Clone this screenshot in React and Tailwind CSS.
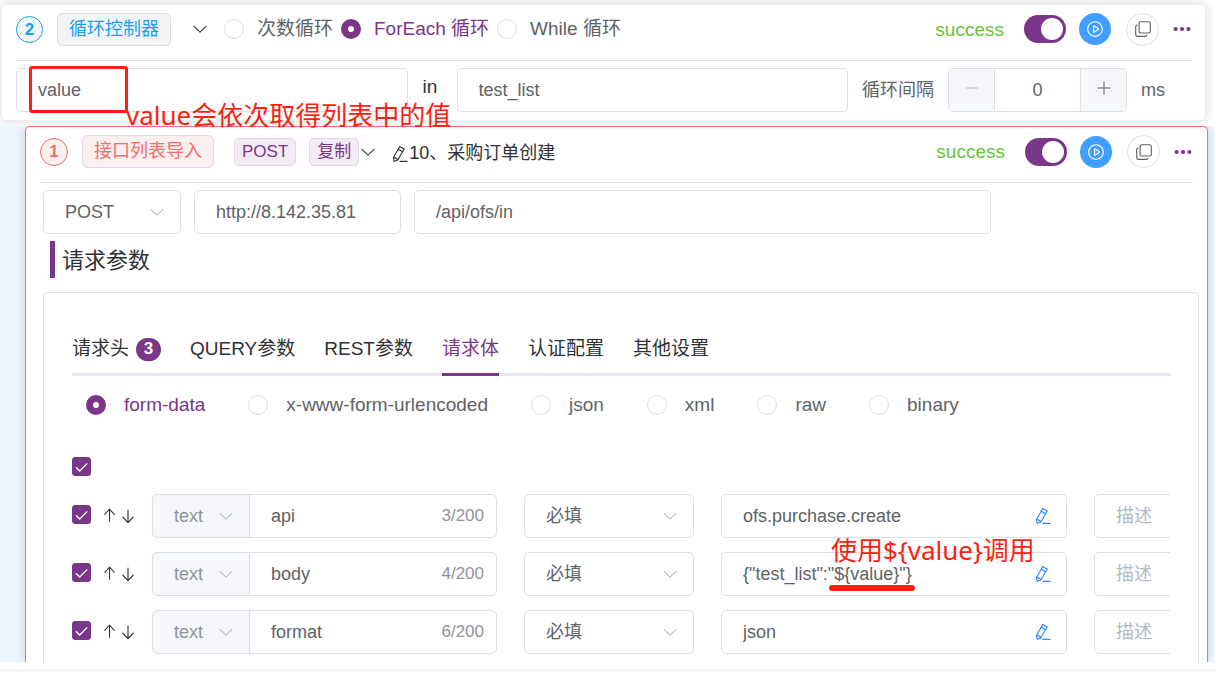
import React from "react";

const PATHS = {
  down: "M831.872 340.864 512 652.672 192.128 340.864a30.592 30.592 0 0 0-42.752 0 29.12 29.12 0 0 0 0 41.6L489.664 714.24a32 32 0 0 0 44.672 0l340.288-331.712a29.12 29.12 0 0 0 0-41.728 30.592 30.592 0 0 0-42.752 0z",
  play: "M512 64a448 448 0 1 1 0 896 448 448 0 0 1 0-896zm0 832a384 384 0 0 0 0-768 384 384 0 0 0 0 768zm-48-247.616L668.608 512 464 375.616v272.768zm10.624-342.656 249.472 166.336a48 48 0 0 1 0 79.872L474.624 718.272A48 48 0 0 1 400 678.336V345.6a48 48 0 0 1 74.624-39.936z",
  copy: "M768 832a128 128 0 0 1-128 128H192A128 128 0 0 1 64 832V384a128 128 0 0 1 128-128v64a64 64 0 0 0-64 64v448a64 64 0 0 0 64 64h448a64 64 0 0 0 64-64h64z M384 128a64 64 0 0 0-64 64v448a64 64 0 0 0 64 64h448a64 64 0 0 0 64-64V192a64 64 0 0 0-64-64H384zm0-64h448a128 128 0 0 1 128 128v448a128 128 0 0 1-128 128H384a128 128 0 0 1-128-128V192A128 128 0 0 1 384 64z",
  pen: "m199.04 672.64 193.984 112 224-387.968-193.92-112-224 388.032zm-23.872 60.16 32.896 148.288 144.896-45.696L175.168 732.8zM455.04 229.248l193.92 112 56.704-98.112-193.984-112-56.64 98.112zM104.32 708.8l384-665.024 304.768 175.936L409.152 884.8h.064l-248.448 78.336L104.32 708.8zm384 254.272v-64h448v64h-448z",
  top: "M572.235 205.282v600.365a30.118 30.118 0 1 1-60.235 0V205.282L292.382 438.633a28.913 28.913 0 0 1-42.646 0 33.43 33.43 0 0 1 0-45.236l271.058-288.045a28.913 28.913 0 0 1 42.647 0L834.5 393.397a33.43 33.43 0 0 1 0 45.176 28.913 28.913 0 0 1-42.647 0l-219.618-233.23z",
  bottom:
    "M544 805.888V168a32 32 0 1 0-64 0v637.888L246.656 557.952a30.72 30.72 0 0 0-45.312 0 35.52 35.52 0 0 0 0 48.064l288 306.048a30.72 30.72 0 0 0 45.312 0l288-306.048a35.52 35.52 0 0 0 0-48 30.72 30.72 0 0 0-45.312 0L544 805.824z",
  minus: "M128 544h768a32 32 0 1 0 0-64H128a32 32 0 0 0 0 64z",
  plus: "M480 480V128a32 32 0 0 1 64 0v352h352a32 32 0 1 1 0 64H544v352a32 32 0 1 1-64 0V544H128a32 32 0 0 1 0-64h352z",
};

function Icon({ name, className = "size-[18px]" }) {
  return (
    <svg viewBox="0 0 1024 1024" fill="currentColor" aria-hidden="true" className={`shrink-0 ${className}`}>
      <path d={PATHS[name]} />
    </svg>
  );
}

const FIELD =
  "h-11 w-full min-w-0 rounded-[5px] border border-[#dcdfe6] px-[21px] text-[18px] outline-none placeholder:text-[#b4b8c0]";

function TextField({ label, className = "", ...rest }) {
  return <input type="text" aria-label={label} className={`${FIELD} bg-white text-[#606266] ${className}`} {...rest} />;
}

function SelectField({ label, options, className = "", tone = "bg-white text-[#606266]" }) {
  return (
    <div className={`relative ${className}`}>
      <select aria-label={label} className={`${FIELD} appearance-none ${tone}`}>
        {options.map((o) => (
          <option key={o}>{o}</option>
        ))}
      </select>
      <span className="pointer-events-none absolute inset-y-0 right-[15px] flex items-center text-[#b9bdc6]">
        <Icon name="down" />
      </span>
    </div>
  );
}

function Radio({ name, label, defaultChecked, gap }) {
  return (
    <label className={`flex items-center text-[19px] leading-7 text-[#606266] has-checked:text-[#7a3688] ${gap}`}>
      <input
        type="radio"
        name={name}
        defaultChecked={defaultChecked}
        className="size-5 shrink-0 appearance-none rounded-full border border-[#dcdfe6] bg-white checked:border-[7px] checked:border-[#7a3688]"
      />
      <span>{label}</span>
    </label>
  );
}

function Check({ label }) {
  return (
    <span className="grid size-[19px] shrink-0 place-items-center">
      <input
        type="checkbox"
        defaultChecked
        aria-label={label}
        className="peer col-start-1 row-start-1 size-[19px] appearance-none rounded-[3px] border border-[#dcdfe6] checked:border-[#7a3688] checked:bg-[#7a3688]"
      />
      <svg
        viewBox="0 0 19 19"
        aria-hidden="true"
        className="pointer-events-none invisible col-start-1 row-start-1 size-[19px] fill-none stroke-white peer-checked:visible"
      >
        <path d="M4 10.2 7.7 14 15.3 6.4" strokeWidth="1.3" />
      </svg>
    </span>
  );
}

function Actions() {
  return (
    <div className="ml-auto flex items-center">
      <span className="mr-5 pt-0.5 text-[19px] text-[#67c23a]">success</span>
      <label className="flex">
        <input type="checkbox" role="switch" defaultChecked aria-label="启用" className="peer sr-only" />
        <span className="flex h-7 w-[42px] justify-end rounded-full bg-[#7a3688] p-[3px]">
          <span className="size-[22px] rounded-full bg-white" />
        </span>
      </label>
      <button
        type="button"
        aria-label="运行"
        className="ml-[13px] grid size-8 place-items-center rounded-full bg-[#409eff] text-white"
      >
        <Icon name="play" />
      </button>
      <button
        type="button"
        aria-label="复制步骤"
        className="ml-[15px] grid size-[33px] place-items-center rounded-full border border-[#dcdfe6] text-[#606266]"
      >
        <Icon name="copy" />
      </button>
      <button type="button" aria-label="更多" className="ml-[14px] text-[#7a3688]">
        <svg viewBox="0 0 19 18" fill="currentColor" className="h-[18px] w-[19px]">
          <circle cx="2.6" cy="9" r="2.1" />
          <circle cx="9" cy="9" r="2.1" />
          <circle cx="15.4" cy="9" r="2.1" />
        </svg>
      </button>
    </div>
  );
}

function LoopCard() {
  return (
    <section className="mr-2 ml-px rounded-[5px] border border-[#ebeef5] bg-white pr-[13px] pb-2 pl-[14px] shadow-[0_0_12px_rgba(0,0,0,0.16)]">
      <div className="flex h-[56px] items-center border-b border-[#dcdfe6] pb-[7px]">
        <span className="grid size-[27px] place-items-center rounded-full border border-[#0fa3f0] bg-[#f4f4f5] text-[17px] font-bold text-[#0fa3f0]">
          2
        </span>
        <span className="ml-[14px] flex h-[33px] items-center rounded-[5px] border border-[#e4d7e7] bg-[#f4f4f5] px-[11px] text-[18px] text-[#0fa3f0]">
          循环控制器
        </span>
        <button type="button" aria-label="展开" className="mr-[15px] ml-[20px] text-[#303133]">
          <Icon name="down" />
        </button>
        <div role="radiogroup" aria-label="循环类型" className="flex items-center gap-2">
          <Radio name="loop" label="次数循环" gap="gap-[13px]" />
          <Radio name="loop" label="ForEach 循环" gap="gap-[13px]" defaultChecked />
          <Radio name="loop" label="While 循环" gap="gap-[13px]" />
        </div>
        <Actions />
      </div>
      <div className="mt-[7px] flex items-center">
        <div className="relative flex-1">
          <TextField label="变量名" defaultValue="value" />
          <span className="pointer-events-none absolute -top-0.5 left-[13px] h-[47px] w-[99px] rounded-[3px] border-[3px] border-[#ff1f10]" />
        </div>
        <span className="w-[49px] pr-1 pb-1.5 text-center text-[19px] text-[#303133]">in</span>
        <div className="flex-1">
          <TextField label="列表" defaultValue="test_list" />
        </div>
        <label htmlFor="interval" className="mx-[14px] text-[18px] text-[#606266]">
          循环间隔
        </label>
        <div className="flex h-11 w-[179px] overflow-hidden rounded-[5px] border border-[#dcdfe6]">
          <button
            type="button"
            aria-label="减少"
            className="grid w-[46px] place-items-center border-r border-[#dcdfe6] bg-[#f5f7fa] pb-1 text-[#b9bdc6]"
          >
            <Icon name="minus" className="size-4" />
          </button>
          <input
            id="interval"
            type="text"
            defaultValue="0"
            className="w-0 flex-1 text-center text-[18px] text-[#606266] outline-none"
          />
          <button
            type="button"
            aria-label="增加"
            className="grid w-[46px] place-items-center border-l border-[#dcdfe6] bg-[#f5f7fa] pb-1 text-[#606266]"
          >
            <Icon name="plus" className="size-4" />
          </button>
        </div>
        <span className="mr-[27px] ml-[14px] text-[18px] text-[#606266]">ms</span>
      </div>
    </section>
  );
}

const TABS = ["请求头", "QUERY参数", "REST参数", "请求体", "认证配置", "其他设置"];
const BODY_TYPES = ["form-data", "x-www-form-urlencoded", "json", "xml", "raw", "binary"];
const ROWS = [
  { name: "api", value: "ofs.purchase.create" },
  { name: "body", value: '{"test_list":"${value}"}', note: true },
  { name: "format", value: "json" },
];

function ParamRow({ name, value, note }) {
  return (
    <div className="flex w-[calc(100%+124px)] items-center gap-[27px]">
      <div className="flex flex-1 items-center">
        <div className="flex w-20 shrink-0 items-center pb-1 text-[#303133]">
          <Check label={`选择 ${name}`} />
          <button type="button" aria-label="上移" className="ml-[9px] pt-1">
            <Icon name="top" />
          </button>
          <button type="button" aria-label="下移" className="ml-px pt-1">
            <Icon name="bottom" />
          </button>
        </div>
        <SelectField
          label="类型"
          options={["text", "file"]}
          className="w-[98px] shrink-0"
          tone="rounded-r-none bg-[#f5f7fa] text-[#909399]"
        />
        <div className="relative -ml-px flex-1">
          <TextField label="参数名" defaultValue={name} className="rounded-l-none pr-[70px]" />
          <span className="absolute inset-y-0 right-[13px] flex items-center text-[17px] text-[#909399]">
            {name.length}/200
          </span>
        </div>
      </div>
      <SelectField label="是否必填" options={["必填", "非必填"]} className="w-[170px] shrink-0" />
      <div className="relative w-[346px] shrink-0">
        <TextField label="参数值" defaultValue={value} className="pr-12" />
        <button type="button" aria-label="编辑" className="absolute inset-y-0 right-[15px] flex items-center text-[#2b85fb]">
          <Icon name="pen" />
        </button>
        {note && (
          <>
            <p className="pointer-events-none absolute -top-[22px] left-[110px] font-['Noto_Sans','Noto_Sans_CJK_SC',sans-serif] text-[26px] leading-10 whitespace-nowrap text-[#ff1f10]">
              {"使用${value}调用"}
            </p>
            <span className="pointer-events-none absolute top-[33px] left-[108px] h-1.5 w-[86px] rounded-full bg-[#ff1f10]" />
          </>
        )}
      </div>
      <div className="w-[200px] shrink-0">
        <TextField label="描述" placeholder="描述" />
      </div>
    </div>
  );
}

function RequestCard() {
  return (
    <section className="mr-1.5 ml-[25px] flex-1 rounded-t-[5px] border border-b-0 border-[#f56c6c] bg-white shadow-[0_0_12px_rgba(0,0,0,0.15)]">
      <div className="mr-[14px] ml-[14px] flex h-[56px] items-center border-b border-[#dcdfe6] pb-1.5">
        <span className="grid size-7 place-items-center rounded-full border border-[#f56c6c] bg-[#fbf0f0] text-[17px] font-bold text-[#f56c6c]">
          1
        </span>
        <span className="ml-[14px] flex h-[33px] items-center rounded-[5px] border border-[#e4d7e7] bg-[#fbf0f0] px-[11px] text-[18px] text-[#f56c6c]">
          接口列表导入
        </span>
        <span className="ml-5 flex h-7 items-center rounded-[5px] border border-[#e4d7e7] bg-[#f2ebf3] px-[7px] text-[17px] text-[#7a3688]">
          POST
        </span>
        <button
          type="button"
          className="ml-[13px] flex h-7 items-center rounded-[5px] border border-[#e4d7e7] bg-[#f2ebf3] px-[7px] text-[17px] text-[#7a3688]"
        >
          复制
        </button>
        <button type="button" aria-label="展开" className="text-[#303133]">
          <Icon name="down" />
        </button>
        <span className="ml-[14px] flex items-center pt-1 text-[18px] text-[#303133]">
          <Icon name="pen" />
          10、采购订单创建
        </span>
        <Actions />
      </div>

      <div className="mt-[7px] mr-[216px] ml-[17px] flex gap-[13px]">
        <SelectField label="请求方法" options={["POST", "GET", "PUT", "DELETE"]} className="w-[138px] shrink-0" />
        <div className="w-[207px] shrink-0">
          <TextField label="域名" defaultValue="http://8.142.35.81" />
        </div>
        <div className="flex-1">
          <TextField label="路径" defaultValue="/api/ofs/in" />
        </div>
      </div>

      <h2 className="mt-[7px] ml-6 border-l-[5px] border-[#7a3688] pt-0.5 pl-[7px] text-[22px] leading-[35px] text-[#303133]">
        请求参数
      </h2>

      <div className="mt-[14px] mr-2 ml-[17px] rounded-t-[5px] border border-b-0 border-[#dcdfe6] px-7 pt-[37px] pb-2">
        <div role="tablist" className="flex gap-[29px] border-b-[3px] border-[#e4e7ed]">
          {TABS.map((t) => (
            <button
              key={t}
              type="button"
              role="tab"
              aria-selected={t === "请求体"}
              className="-mb-[3px] flex h-[46px] items-center border-b-[3px] border-transparent pb-[5px] text-[19px] text-[#303133] aria-selected:border-[#7a3688] aria-selected:text-[#7a3688]"
            >
              {t}
              {t === "请求头" && (
                <span className="ml-[7px] flex h-[23px] w-[25px] items-center justify-center rounded-full bg-[#7a3688] text-[17px] font-bold text-white">
                  3
                </span>
              )}
            </button>
          ))}
        </div>
        <div role="radiogroup" aria-label="请求体类型" className="mt-[15px] ml-[14px] flex gap-[43px]">
          {BODY_TYPES.map((t, i) => (
            <Radio key={t} name="body-type" label={t} defaultChecked={i === 0} gap="gap-[18px]" />
          ))}
        </div>
        <div className="mt-[38px]">
          <Check label="全选" />
        </div>
        <div className="mt-[18px] flex flex-col gap-[14px] overflow-x-clip">
          {ROWS.map((r) => (
            <ParamRow key={r.name} {...r} />
          ))}
        </div>
      </div>
    </section>
  );
}

export default function App() {
  return (
    <div className="flex min-h-screen flex-col bg-white font-['Liberation_Sans','Noto_Sans_CJK_SC',sans-serif]">
      <main className="relative mr-0.5 flex flex-1 flex-col overflow-hidden bg-[#eef6ff]">
        <div className="relative z-10 overflow-hidden bg-white pt-1 pb-[5px]">
          <LoopCard />
        </div>
        <RequestCard />
        <p className="pointer-events-none absolute top-[95px] left-[126px] z-20 font-['Noto_Sans','Noto_Sans_CJK_SC',sans-serif] text-[26px] leading-10 whitespace-nowrap text-[#ff1f10]">
          value会依次取得列表中的值
        </p>
      </main>
      <footer className="pt-2">
        <div className="h-1.5 border-t border-[#ebeef5]" />
      </footer>
    </div>
  );
}
